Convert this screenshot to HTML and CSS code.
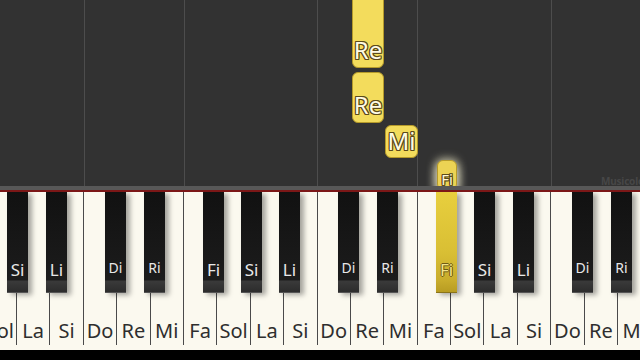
FILE: index.html
```html
<!DOCTYPE html>
<html>
<head>
<meta charset="utf-8">
<link rel="stylesheet" href="styles.css">
</head>
<body>
<div class="screen">
  <div class="roll">
    <div class="col c1"></div>
    <div class="col c2"></div>
    <div class="col c3"></div>
    <div class="col c4"></div>
    <div class="col c5"></div>
    <div class="col c6"></div>
    <div class="note re1"><span>Re</span></div>
    <div class="note re2"><span>Re</span></div>
    <div class="note mi"><span>Mi</span></div>
    <div class="note fi"><span>Fi</span></div>
    <div class="mark">Musicolo</div>
  </div>
  <div class="band"></div>
  <div class="redline"></div>
  <div class="keyboard">
    <div class="whites">
      <div class="wk"><span>Sol</span></div>
      <div class="wk"><span>La</span></div>
      <div class="wk"><span>Si</span></div>
      <div class="wk"><span>Do</span></div>
      <div class="wk"><span>Re</span></div>
      <div class="wk"><span>Mi</span></div>
      <div class="wk"><span>Fa</span></div>
      <div class="wk"><span>Sol</span></div>
      <div class="wk"><span>La</span></div>
      <div class="wk"><span>Si</span></div>
      <div class="wk"><span>Do</span></div>
      <div class="wk"><span>Re</span></div>
      <div class="wk"><span>Mi</span></div>
      <div class="wk"><span>Fa</span></div>
      <div class="wk"><span>Sol</span></div>
      <div class="wk"><span>La</span></div>
      <div class="wk"><span>Si</span></div>
      <div class="wk"><span>Do</span></div>
      <div class="wk"><span>Re</span></div>
      <div class="wk"><span>Mi</span></div>
    </div>
    <div class="strip"></div>
    <div class="bk big" style="left:7px"><span>Si</span></div>
    <div class="bk big" style="left:46px"><span>Li</span></div>
    <div class="bk" style="left:105px"><span>Di</span></div>
    <div class="bk" style="left:144px"><span>Ri</span></div>
    <div class="bk big" style="left:203px"><span>Fi</span></div>
    <div class="bk big" style="left:241px"><span>Si</span></div>
    <div class="bk big" style="left:279px"><span>Li</span></div>
    <div class="bk" style="left:338px"><span>Di</span></div>
    <div class="bk" style="left:377px"><span>Ri</span></div>
    <div class="bk big on" style="left:436px"><span>Fi</span></div>
    <div class="bk big" style="left:474px"><span>Si</span></div>
    <div class="bk big" style="left:513px"><span>Li</span></div>
    <div class="bk" style="left:572px"><span>Di</span></div>
    <div class="bk" style="left:611px"><span>Ri</span></div>
  </div>
  <div class="bottom"></div>
</div>
</body>
</html>
```
FILE: styles.css
```css
html, body { margin: 0; padding: 0; background: #000; }
.screen {
  width: 640px; height: 360px; overflow: hidden;
  display: flex; flex-direction: column;
  font-family: "Noto Sans", "Open Sans", sans-serif;
}
.roll {
  position: relative; height: 186px; background: #323232;
  display: flex; overflow: hidden;
}
.col { height: 100%; box-sizing: border-box; }
.c1 { width: 84px; }
.c2 { width: 100px; border-left: 1px solid #4d4d4d; }
.c3 { width: 133px; border-left: 1px solid #4d4d4d; }
.c4 { width: 100px; border-left: 1px solid #4d4d4d; }
.c5 { width: 134px; border-left: 1px solid #4d4d4d; }
.c6 { flex: 1; border-left: 1px solid #4d4d4d; }

.note {
  position: absolute; box-sizing: border-box;
  background: #f3dc5c; border: 1px solid #b59a2a; border-radius: 6px;
  display: flex; align-items: flex-end; justify-content: center;
  color: #fffbe6; font-size: 24px; line-height: 1;
  text-shadow: 1px 0 0 #5b4a1a, -1px 0 0 #5b4a1a, 0 1px 0 #5b4a1a, 0 -1px 0 #5b4a1a,
               1px 1px 0 #5b4a1a, -1px -1px 0 #5b4a1a, 1px -1px 0 #5b4a1a, -1px 1px 0 #5b4a1a;
}
.note span { padding-bottom: 5px; }
.re1 { left: 352px; top: -10px; width: 32px; height: 78px; }
.re2 { left: 352px; top: 72px; width: 32px; height: 51px; }
.mi { left: 385px; top: 125px; width: 33px; height: 33px; align-items: center; }
.mi span { padding-bottom: 2px; }
.fi {
  left: 437px; top: 160px; width: 20px; height: 30px; font-size: 15px;
  background: #ecd354;
  box-shadow: 0 0 8px 2px rgba(255, 250, 210, 0.55), 0 6px 10px 2px rgba(255, 255, 230, 0.6);
}
.fi span { padding-bottom: 2px; color: #fff8d8; }
.mark {
  position: absolute; right: -4px; top: 174px;
  font-size: 10px; font-weight: bold; color: #474747; letter-spacing: -0.2px;
}
.band { height: 4px; background: #585858; }
.redline { height: 2px; background: #7c1717; }

.keyboard { position: relative; height: 158px; background: #fbf9ef; overflow: hidden; }
.whites { display: flex; margin-left: -16.4px; height: 153px; }
.wk {
  flex: 0 0 33.4px; box-sizing: border-box; border-right: 1px solid #4a4a4a;
  display: flex; align-items: flex-end; justify-content: center;
  background: #fbf9ef;
}
.wk span { font-size: 20px; color: #2e2e2e; line-height: 1; padding-bottom: 4px; }
.strip { height: 5px; background: #fbf9ef; }

.bk {
  position: absolute; top: 0; width: 21px; height: 101px; box-sizing: border-box;
  background: linear-gradient(#111 0%, #1c1c1c 88%, #3a3a3a 89%, #2c2c2c 100%);
  border-bottom: 1px solid #555;
  box-shadow: 4px 2px 5px rgba(0, 0, 0, 0.35);
  display: flex; align-items: flex-end; justify-content: center;
  color: #e8e8e8; font-size: 14px; line-height: 1;
}
.bk span { padding-bottom: 17px; }
.bk.big { font-size: 17px; }
.bk.big span { padding-bottom: 14px; }
.bk.on {
  background: linear-gradient(#e8cf3e 0%, #d9bf34 60%, #c9ad2c 88%, #b89c22 100%);
  border-bottom: 1px solid #8a741a;
  color: #f2e48a;
  text-shadow: 1px 0 0 #6e5a14, -1px 0 0 #6e5a14, 0 1px 0 #6e5a14, 0 -1px 0 #6e5a14;
}
.bottom { flex: 1; background: #000; }
```
